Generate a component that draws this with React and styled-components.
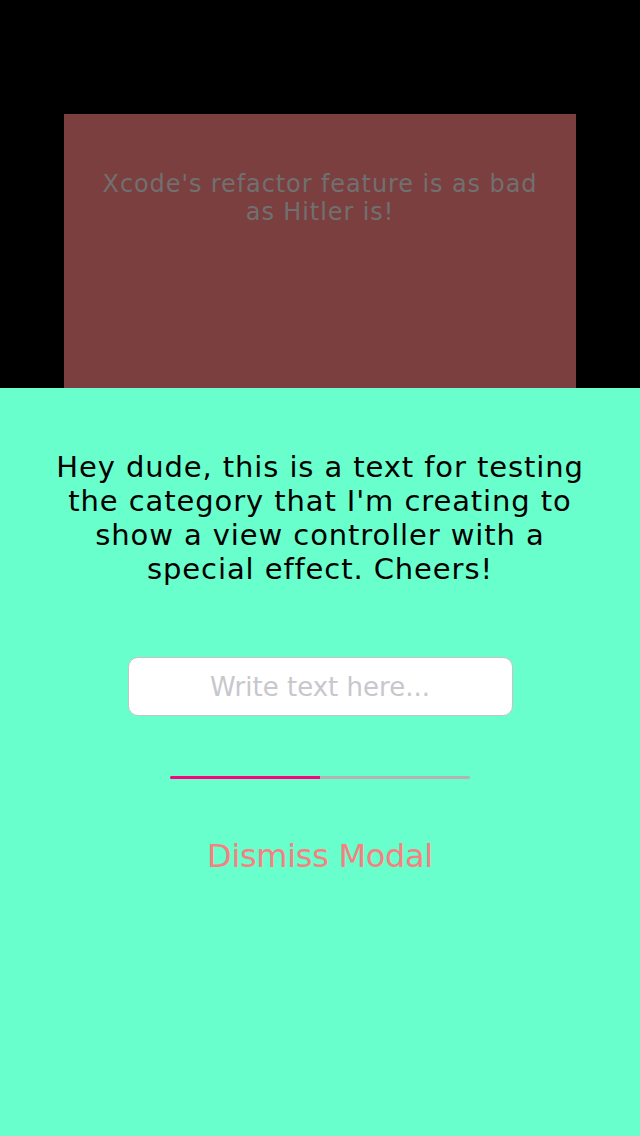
import React from "react";
import styled, { createGlobalStyle } from "styled-components";

const GlobalStyle = createGlobalStyle`
  html, body {
    margin: 0;
    padding: 0;
    background: #000;
  }
  body {
    font-family: "DejaVu Sans", "Liberation Sans", sans-serif;
  }
`;

const Screen = styled.div`
  width: 640px;
  height: 1136px;
  display: flex;
  flex-direction: column;
  overflow: hidden;
`;

const Backdrop = styled.div`
  height: 388px;
  background: #000;
  display: flex;
  justify-content: center;
  padding-top: 114px;
  box-sizing: border-box;
`;

const Card = styled.div`
  width: 512px;
  height: 274px;
  background: #7c3f3f;
  padding-top: 56px;
  box-sizing: border-box;
  text-align: center;
`;

const CardText = styled.p`
  margin: 0;
  color: #707070;
  font-size: 24px;
  line-height: 28px;
  letter-spacing: 0.9px;
`;

const Sheet = styled.div`
  flex: 1;
  background: #68ffcc;
  display: flex;
  flex-direction: column;
  align-items: center;
  padding-top: 62px;
`;

const Message = styled.p`
  margin: 0;
  color: #000;
  font-size: 29px;
  line-height: 34px;
  text-align: center;
  letter-spacing: 0.9px;
`;

const Line = styled.span`
  display: block;
  white-space: nowrap;
`;

const Input = styled.input`
  margin-top: 71px;
  width: 385px;
  height: 59px;
  box-sizing: border-box;
  border: 1px solid #c4c4c4;
  border-radius: 10px;
  background: #fff;
  text-align: center;
  font-family: inherit;
  font-size: 26px;
  color: #333;
  outline: none;
  &::placeholder {
    color: #c7c7cd;
  }
`;

const Track = styled.div`
  margin-top: 60px;
  width: 300px;
  height: 3px;
  border-radius: 2px;
  background: #b3b3b3;
  overflow: hidden;
  display: flex;
`;

const Fill = styled.div`
  height: 100%;
  background: #ff0080;
`;

const DismissButton = styled.button`
  margin-top: 57px;
  background: none;
  border: none;
  padding: 0;
  font-family: inherit;
  font-size: 32px;
  line-height: 40px;
  color: #f78080;
  cursor: pointer;
  letter-spacing: -0.3px;
`;

export default function App() {
  const progress = 0.5;
  return (
    <Screen>
      <GlobalStyle />
      <Backdrop>
        <Card>
          <CardText>
            <Line>Xcode's refactor feature is as bad</Line>
            <Line>as Hitler is!</Line>
          </CardText>
        </Card>
      </Backdrop>
      <Sheet>
        <Message>
          <Line>Hey dude, this is a text for testing</Line>
          <Line>the category that I'm creating to</Line>
          <Line>show a view controller with a</Line>
          <Line>special effect. Cheers!</Line>
        </Message>
        <Input placeholder="Write text here..." />
        <Track>
          <Fill style={{ width: `${progress * 100}%` }} />
        </Track>
        <DismissButton>Dismiss Modal</DismissButton>
      </Sheet>
    </Screen>
  );
}
